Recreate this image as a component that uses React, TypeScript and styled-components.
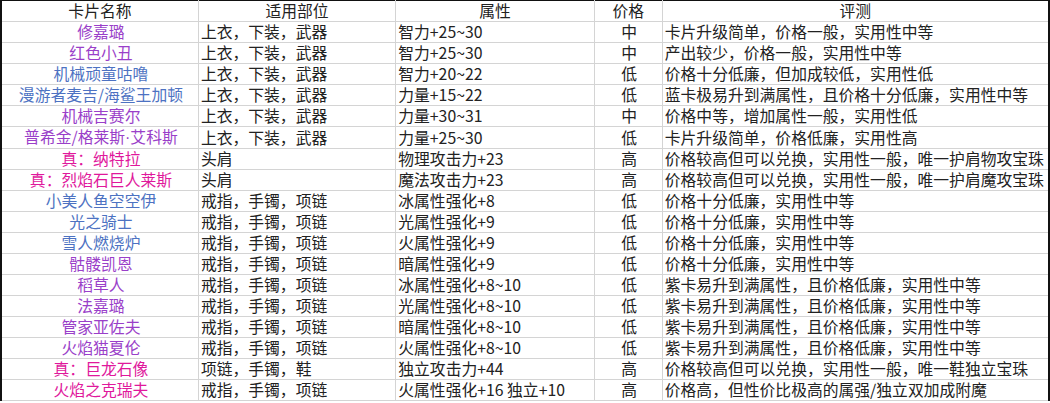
import React from 'react';
import styled, {createGlobalStyle} from "styled-components";

const GlobalStyle = createGlobalStyle`
    html, body {
        margin: 0;
        padding: 0;
        background: #fff;
    }
    body {
        font-family: "Noto Sans CJK SC", "Liberation Sans", sans-serif;
        color: #222;
    }
`

const Sheet = styled.table`
    width: 1050px;
    border-collapse: collapse;
    table-layout: fixed;
    border-top: 1px solid #111;
    border-left: 2px solid #111;
    border-right: 2px solid #111;
    font-size: 15.8px;
`

const HeadCell = styled.th`
    height: 20px;
    padding: 0;
    font-weight: 400;
    text-align: center;
    line-height: 20px;
    color: #222;
    border-bottom: 1px solid #d4d4d4;
    border-right: 1px solid #d4d4d4;
    white-space: nowrap;
    overflow: hidden;
`

const Cell = styled.td<{ $align?: "left" | "center"; $color?: string }>`
    height: 20px;
    padding: 0 0 0 2px;
    text-align: ${p => p.$align ?? "left"};
    line-height: 20px;
    color: ${p => p.$color ?? "#222"};
    border-bottom: 1px solid #d4d4d4;
    border-right: 1px solid #d4d4d4;
    white-space: nowrap;
    overflow: hidden;
`

const Dot = styled.span`
    font-family: "Liberation Sans", sans-serif;
`

const colors = {
    purple: "#9a3fc9",
    blue: "#4d72c2",
    pink: "#e0189c",
}

type Row = [React.ReactNode, keyof typeof colors, string, string, string, string]

const rows: Row[] = [
    ["修嘉璐", "purple", "上衣，下装，武器", "智力+25~30", "中", "卡片升级简单，价格一般，实用性中等"],
    ["红色小丑", "purple", "上衣，下装，武器", "智力+25~30", "中", "产出较少，价格一般，实用性中等"],
    ["机械顽童咕噜", "blue", "上衣，下装，武器", "智力+20~22", "低", "价格十分低廉，但加成较低，实用性低"],
    ["漫游者麦吉/海鲨王加顿", "blue", "上衣，下装，武器", "力量+15~22", "低", "蓝卡极易升到满属性，且价格十分低廉，实用性中等"],
    ["机械吉赛尔", "purple", "上衣，下装，武器", "力量+30~31", "中", "价格中等，增加属性一般，实用性低"],
    [<>普希金/格莱斯<Dot>·</Dot>艾科斯</>, "purple", "上衣，下装，武器", "力量+25~30", "低", "卡片升级简单，价格低廉，实用性高"],
    ["真：纳特拉", "pink", "头肩", "物理攻击力+23", "高", "价格较高但可以兑换，实用性一般，唯一护肩物攻宝珠"],
    ["真：烈焰石巨人莱斯", "pink", "头肩", "魔法攻击力+23", "高", "价格较高但可以兑换，实用性一般，唯一护肩魔攻宝珠"],
    ["小美人鱼空空伊", "blue", "戒指，手镯，项链", "冰属性强化+8", "低", "价格十分低廉，实用性中等"],
    ["光之骑士", "blue", "戒指，手镯，项链", "光属性强化+9", "低", "价格十分低廉，实用性中等"],
    ["雪人燃烧炉", "blue", "戒指，手镯，项链", "火属性强化+9", "低", "价格十分低廉，实用性中等"],
    ["骷髅凯恩", "purple", "戒指，手镯，项链", "暗属性强化+9", "低", "价格十分低廉，实用性中等"],
    ["稻草人", "purple", "戒指，手镯，项链", "冰属性强化+8~10", "低", "紫卡易升到满属性，且价格低廉，实用性中等"],
    ["法嘉璐", "purple", "戒指，手镯，项链", "光属性强化+8~10", "低", "紫卡易升到满属性，且价格低廉，实用性中等"],
    ["管家亚佐夫", "purple", "戒指，手镯，项链", "暗属性强化+8~10", "低", "紫卡易升到满属性，且价格低廉，实用性中等"],
    ["火焰猫夏伦", "purple", "戒指，手镯，项链", "火属性强化+8~10", "低", "紫卡易升到满属性，且价格低廉，实用性中等"],
    ["真：巨龙石像", "pink", "项链，手镯，鞋", "独立攻击力+44", "高", "价格较高但可以兑换，实用性一般，唯一鞋独立宝珠"],
    ["火焰之克瑞夫", "pink", "戒指，手镯，项链", "火属性强化+16 独立+10", "高", "价格高，但性价比极高的属强/独立双加成附魔"],
]

const headers = ["卡片名称", "适用部位", "属性", "价格", "评测"]
const widths = [197, 197, 198, 68, 386]

export default function App() {
    return (
        <>
            <GlobalStyle/>
            <Sheet>
                <colgroup>
                    {widths.map((w, i) => <col key={i} style={{width: w}}/>)}
                </colgroup>
                <thead>
                <tr>
                    {headers.map(h => <HeadCell key={h}>{h}</HeadCell>)}
                </tr>
                </thead>
                <tbody>
                {rows.map(([name, c, slot, attr, price, note], i) => (
                    <tr key={i}>
                        <Cell $align="center" $color={colors[c]}>{name}</Cell>
                        <Cell>{slot}</Cell>
                        <Cell>{attr}</Cell>
                        <Cell $align="center">{price}</Cell>
                        <Cell>{note}</Cell>
                    </tr>
                ))}
                </tbody>
            </Sheet>
        </>
    )
}
